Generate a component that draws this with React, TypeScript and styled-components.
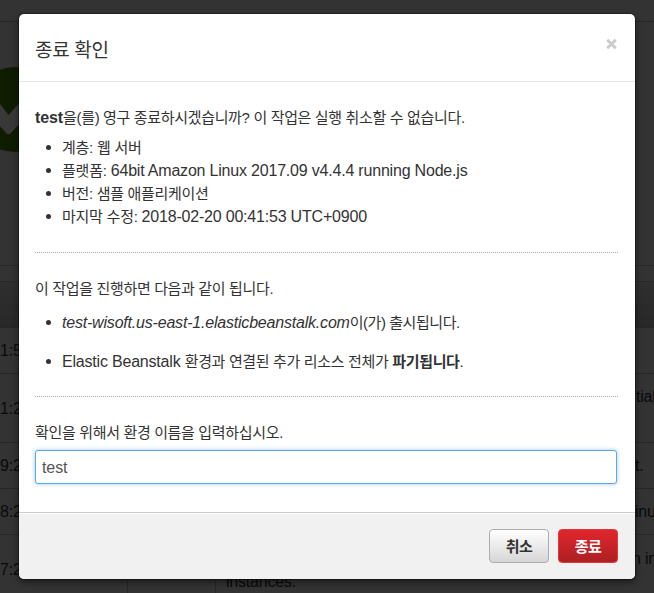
import React from "react";
import styled, { createGlobalStyle } from "styled-components";

const GlobalStyle = createGlobalStyle`
  * { box-sizing: border-box; }
  html, body { margin: 0; height: 100%; overflow: hidden; background: #333; }
  body {
    font-family: "Liberation Sans", "Noto Sans CJK KR", sans-serif;
    font-size: 15px;
    line-height: 23px;
    color: #333;
  }
`;

const Screen = styled.div`
  position: relative;
  width: 654px;
  height: 593px;
  overflow: hidden;
`;

/* Dimmed console page behind the dialog */
const Page = styled.div`
  display: flex;
  flex-direction: column;
  height: 100%;
  background: #333;
  color: #0a0a0a;
  font-size: 16px;
  letter-spacing: -0.2px;
`;

const TopBar = styled.div`
  flex: none;
  height: 22px;
  border-bottom: 1px solid #272727;
`;

const HealthPanel = styled.div`
  flex: none;
  height: 244px;
  padding-top: 45px;
  border-bottom: 1px solid #272727;
`;

const HealthIcon = styled.svg`
  display: block;
`;

const TableHead = styled.div`
  flex: none;
  height: 47px;
  margin-top: 15px;
  border-top: 1px solid #272727;
  border-bottom: 1px solid #272727;
  background: linear-gradient(#2f2f2f, #282828);
`;

const EventRow = styled.div<{ $height: number }>`
  display: grid;
  grid-template-columns: 128px 88px 1fr;
  flex: none;
  height: ${(p) => p.$height}px;
  border-bottom: 1px solid #272727;
`;

const EventCell = styled.div<{ $end?: boolean }>`
  display: flex;
  align-items: ${(p) => (p.$end ? "flex-end" : "center")};
  justify-content: space-between;
  overflow: hidden;
  white-space: nowrap;
  border-right: 1px solid #272727;
  padding: ${(p) => (p.$end ? "0 0 10px 10px" : "0")};
  &:last-child { border-right: 0; }
`;

const MessageTail = styled.span<{ $left: number; $raise?: number }>`
  margin-left: auto;
  width: calc(654px - ${(p) => p.$left}px);
  flex: none;
  padding-bottom: ${(p) => p.$raise ?? 0}px;
`;

const Dialog = styled.section`
  position: absolute;
  top: 14px;
  left: 19px;
  display: flex;
  flex-direction: column;
  width: 616px;
  height: 565px;
  overflow: hidden;
  border-radius: 5px;
  background: #fff;
  box-shadow: 0 0 0 1px rgba(0, 0, 0, 0.3), 0 3px 7px rgba(0, 0, 0, 0.5);
`;

const Header = styled.header`
  display: flex;
  justify-content: space-between;
  height: 68px;
  padding: 24px 18px 0 16px;
  border-bottom: 1px solid #e5e5e5;
`;

const Title = styled.h3`
  margin: 0;
  font-size: 19px;
  line-height: 25px;
  font-weight: 400;
  letter-spacing: -0.3px;
`;

const CloseButton = styled.button`
  width: 11px;
  height: 12px;
  padding: 0;
  border: 0;
  background: none;
  svg { display: block; }
`;

const Body = styled.div`
  flex: 1;
  padding: 24px 17px 0 16px;
  white-space: nowrap;
`;

const Text = styled.p<{ $tracking: number }>`
  margin: 0;
  height: 23px;
  letter-spacing: ${(p) => p.$tracking}px;
`;

const List = styled.ul<{ $gap: number; $top: number }>`
  display: flex;
  flex-direction: column;
  gap: ${(p) => p.$gap}px;
  margin: ${(p) => p.$top}px 0 0;
  padding: 0;
  list-style: none;
`;

const Item = styled.li`
  display: flex;
  align-items: baseline;
  height: 23px;
  &::before {
    content: "";
    flex: none;
    align-self: center;
    width: 5px;
    height: 5px;
    margin: 0 11px;
    border-radius: 50%;
    background: #333;
  }
`;

const Run = styled.span<{ $tracking?: number }>`
  white-space: pre;
  letter-spacing: ${(p) => p.$tracking ?? 0}px;
`;

/* Latin runs are set one pixel larger than the Hangul */
const Latin = styled.span`
  white-space: pre;
  font-size: 16px;
  letter-spacing: -0.2px;
`;

const Strong = styled.b`
  font-size: 16px;
  letter-spacing: -0.1px;
`;

const Divider = styled.hr<{ $top: number }>`
  height: 0;
  margin: ${(p) => p.$top}px 0 24px;
  border: 0;
  border-top: 1px dotted #aaa;
`;

const NameInput = styled.input`
  display: block;
  width: 582px;
  height: 34px;
  margin-top: 6px;
  padding: 1px 7px 0 6px;
  border: 1px solid #5ea5ea;
  border-radius: 3px;
  outline: 0;
  box-shadow: 0 0 4px rgba(94, 165, 234, 0.6);
  font: inherit;
  font-size: 16px;
  letter-spacing: -0.1px;
  color: #555;
`;

const Footer = styled.footer`
  display: flex;
  justify-content: flex-end;
  gap: 9px;
  height: 67px;
  padding: 16px 17px 0 0;
  border-top: 1px solid #ccc;
  box-shadow: inset 0 1px 0 #fff;
  background: #f1f1f1;
`;

const Button = styled.button<{ $danger?: boolean }>`
  width: 60px;
  height: 34px;
  padding: 0;
  border: 1px solid ${(p) => (p.$danger ? "#e8353b" : "#adadad")};
  border-radius: 4px;
  background: ${(p) =>
    p.$danger ? "linear-gradient(#e0262d, #ad2024)" : "linear-gradient(#ffffff, #d6d6d6)"};
  color: ${(p) => (p.$danger ? "#fff" : "#333")};
  font: inherit;
  font-weight: 700;
  letter-spacing: -0.5px;
`;

const events = [
  { time: "1:5", height: 46 },
  { time: "1:2", height: 69, tail: "tial", left: 636, raise: 23 },
  { time: "9:2", height: 46, tail: "t.", left: 635 },
  { time: "8:2", height: 46, tail: "inu", left: 635 },
  { time: "7:2", height: 69, lead: "instances.", tail: "n in", left: 632, raise: 23 },
];

export default function App() {
  return (
    <Screen>
      <GlobalStyle />
      <Page aria-hidden="true">
        <TopBar />
        <HealthPanel>
          <HealthIcon width="60" height="86" viewBox="0 0 60 86">
            <circle cx="15" cy="42.5" r="42.5" fill="#0f1c00" />
            <path d="M-2 34L8.500 48L21 34V55L11 66Q8.500 68.500 6 66L-2 57Z" fill="#383838" />
          </HealthIcon>
        </HealthPanel>
        <TableHead />
        {events.map((event) => (
          <EventRow key={event.time} $height={event.height}>
            <EventCell>{event.time}</EventCell>
            <EventCell />
            <EventCell $end={Boolean(event.lead)}>
              {event.lead}
              {event.tail && (
                <MessageTail $left={event.left} $raise={event.raise}>
                  {event.tail}
                </MessageTail>
              )}
            </EventCell>
          </EventRow>
        ))}
      </Page>

      <Dialog role="dialog" aria-modal="true">
        <Header>
          <Title>종료 확인</Title>
          <CloseButton aria-label="닫기">
            <svg width="11" height="12" viewBox="0 0 11 12">
              <path d="M1.200 1.900L9.800 10.300M9.800 1.900L1.200 10.300" stroke="#ccc" strokeWidth="3" />
            </svg>
          </CloseButton>
        </Header>
        <Body>
          <Text $tracking={-0.34}>
            <Strong>test</Strong>을(를) 영구 종료하시겠습니까? 이 작업은 실행 취소할 수 없습니다.
          </Text>
          <List $gap={0} $top={7}>
            <Item><Run $tracking={-0.25}>계층: 웹 서버</Run></Item>
            <Item>
              <Run $tracking={-0.2}>플랫폼: </Run>
              <Latin>64bit Amazon Linux 2017.09 v4.4.4 running Node.js</Latin>
            </Item>
            <Item><Run $tracking={-0.3}>버전: 샘플 애플리케이션</Run></Item>
            <Item>
              <Run $tracking={-0.24}>마지막 수정: </Run>
              <Latin>2018-02-20 00:41:53 UTC+0900</Latin>
            </Item>
          </List>
          <Divider $top={24} />
          <Text $tracking={-0.34}>이 작업을 진행하면 다음과 같이 됩니다.</Text>
          <List $gap={16} $top={11}>
            <Item>
              <Latin as="em">test-wisoft.us-east-1.elasticbeanstalk.com</Latin>
              <Run $tracking={-0.45}>이(가) 출시됩니다.</Run>
            </Item>
            <Item>
              <Latin>Elastic Beanstalk </Latin>
              <Run $tracking={-0.34}>환경과 연결된 추가 리소스 전체가 <b>파기됩니다</b>.</Run>
            </Item>
          </List>
          <Divider $top={23} />
          <Text $tracking={-0.34}>확인을 위해서 환경 이름을 입력하십시오.</Text>
          <NameInput defaultValue="test" />
        </Body>
        <Footer>
          <Button>취소</Button>
          <Button $danger>종료</Button>
        </Footer>
      </Dialog>
    </Screen>
  );
}
